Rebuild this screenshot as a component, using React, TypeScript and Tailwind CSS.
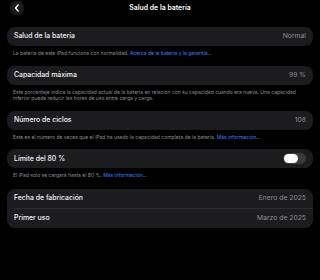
import React from "react";

const Row = ({ label, value, children }: { label: string; value?: string; children?: React.ReactNode }) => (
  <div className="flex h-[19px] items-center justify-between px-[7px]">
    <span className="text-[6.9px] font-medium text-[#f2f2f7]">{label}</span>
    {value !== undefined ? <span className="text-[6.8px] text-[#8e8e93]">{value}</span> : children}
  </div>
);

const Footer = ({ children }: { children: React.ReactNode }) => (
  <div className="px-[6px] pt-[4px] text-[5px] leading-[6.6px] text-[#8e8e93]">{children}</div>
);

const Link = ({ children }: { children: React.ReactNode }) => <span className="text-[#3b82f6]">{children}</span>;

export default function App() {
  return (
    <div className="h-[280px] w-[320px] overflow-hidden bg-black" style={{ fontFamily: "Inter, 'Noto Sans', sans-serif" }}>
      <div className="relative flex h-[17px] items-center justify-center">
        <div className="absolute left-[10px] top-[1px] flex h-[14px] w-[14px] items-center justify-center rounded-full bg-[#1c1c1e]">
          <svg width="6" height="8" viewBox="0 0 6 8" fill="none">
            <path d="M4.2 1 L1.5 4 L4.2 7" stroke="white" strokeWidth="1.4" strokeLinecap="round" strokeLinejoin="round" />
          </svg>
        </div>
        <span className="text-[6.9px] font-semibold text-white">Salud de la batería</span>
      </div>

      <div className="px-[7px] pt-[10px]">
        <div className="rounded-[8px] bg-[#1c1c1e]">
          <Row label="Salud de la batería" value="Normal" />
        </div>
        <Footer>
          La batería de este iPad funciona con normalidad. <Link>Acerca de la batería y la garantía...</Link>
        </Footer>

        <div className="mt-[9px] rounded-[8px] bg-[#1c1c1e]">
          <Row label="Capacidad máxima" value="99 %" />
        </div>
        <Footer>
          Este porcentaje indica la capacidad actual de la batería en relación con su capacidad cuando era nueva. Una capacidad inferior puede reducir las horas de uso entre carga y carga.
        </Footer>

        <div className="mt-[9px] rounded-[8px] bg-[#1c1c1e]">
          <Row label="Número de ciclos" value="108" />
        </div>
        <Footer>
          Este es el número de veces que el iPad ha usado la capacidad completa de la batería. <Link>Más información...</Link>
        </Footer>

        <div className="mt-[9px] rounded-[8px] bg-[#1c1c1e]">
          <Row label="Límite del 80 %">
            <div className="flex h-[11px] w-[23px] items-center rounded-full bg-[#3a3a3c] px-[1px]">
              <div className="h-[9px] w-[14px] rounded-full bg-white" />
            </div>
          </Row>
        </div>
        <Footer>
          El iPad solo se cargará hasta el 80 %. <Link>Más información...</Link>
        </Footer>

        <div className="mt-[10px] rounded-[8px] bg-[#1c1c1e]">
          <Row label="Fecha de fabricación" value="Enero de 2025" />
          <div className="ml-[7px] h-px bg-[#2c2c2e]" />
          <Row label="Primer uso" value="Marzo de 2025" />
        </div>
      </div>
    </div>
  );
}
